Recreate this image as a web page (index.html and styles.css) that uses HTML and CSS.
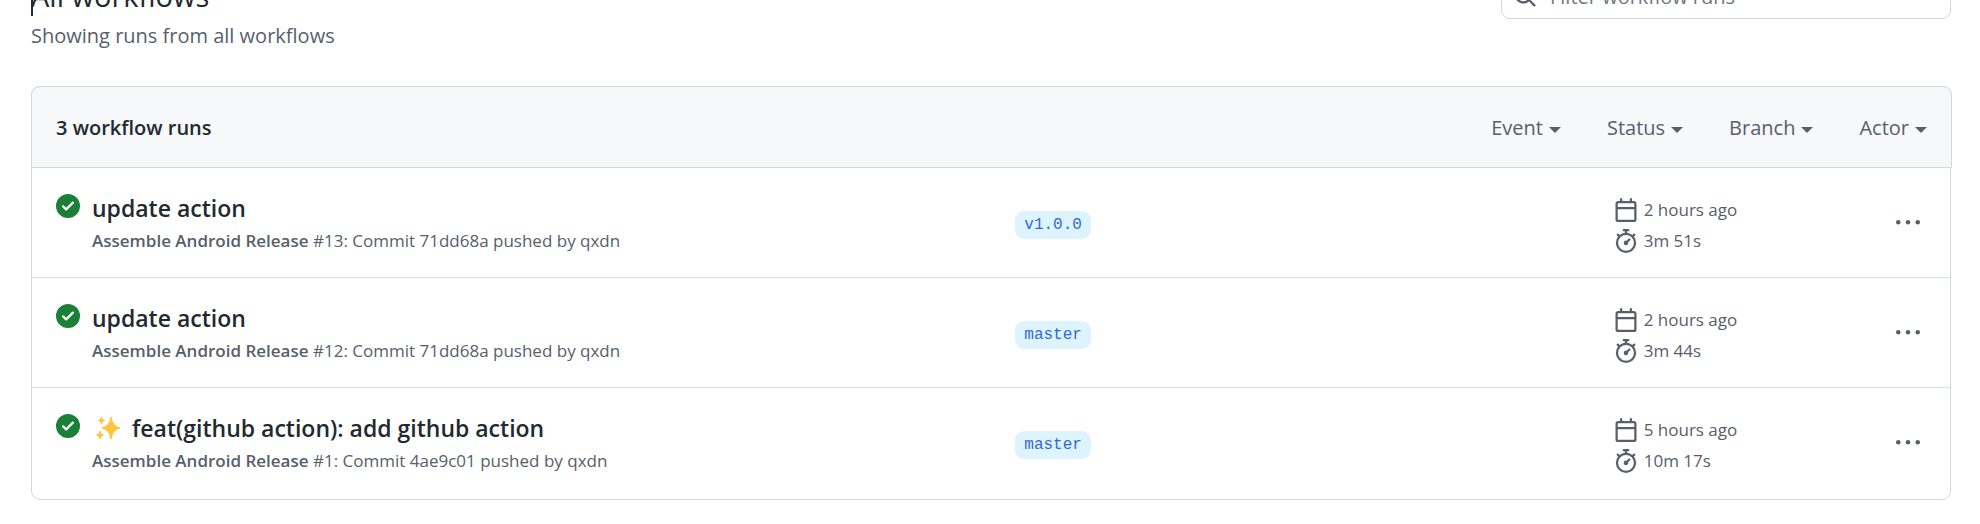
FILE: index.html
```html
<!DOCTYPE html>
<html lang="en">
<head>
<meta charset="utf-8">
<title>Workflow runs</title>
<link rel="stylesheet" href="styles.css">
</head>
<body>
<svg class="defs" aria-hidden="true">
  <symbol id="check" viewBox="0 0 16 16"><path fill-rule="evenodd" d="M8 16A8 8 0 108 0a8 8 0 000 16zm3.78-9.72a.75.75 0 00-1.06-1.06L6.75 9.19 5.28 7.72a.75.75 0 00-1.06 1.06l2 2a.75.75 0 001.06 0l4.5-4.5z"/></symbol>
  <symbol id="calendar" viewBox="0 0 16 16"><path fill-rule="evenodd" d="M4.75 0a.75.75 0 01.75.75V2h5V.75a.75.75 0 011.5 0V2h1.25c.966 0 1.75.784 1.75 1.75v10.5A1.75 1.75 0 0113.25 16H2.75A1.75 1.75 0 011 14.25V3.75C1 2.784 1.784 2 2.75 2H4V.75A.75.75 0 014.75 0zm0 3.5h8.5a.25.25 0 01.25.25V6h-11V3.75a.25.25 0 01.25-.25h2zm-2.25 4v6.75c0 .138.112.25.25.25h10.5a.25.25 0 00.25-.25V7.5h-11z"/></symbol>
  <symbol id="stopwatch" viewBox="0 0 16 16"><path fill-rule="evenodd" d="M5.75.75A.75.75 0 016.5 0h3a.75.75 0 010 1.5h-.75v1l-.001.041a6.718 6.718 0 013.464 1.435l.007-.006.75-.75a.75.75 0 111.06 1.06l-.75.75-.006.007a6.75 6.75 0 11-10.548 0L2.72 5.03l-.75-.75a.75.75 0 011.06-1.06l.75.75.007.006A6.718 6.718 0 017.25 2.541a.756.756 0 010-.041v-1H6.5a.75.75 0 01-.75-.75zM8 14.5A5.25 5.25 0 108 4a5.25 5.25 0 000 10.5zm.389-6.7l1.33-1.33a.75.75 0 111.061 1.06L9.45 8.861A1.502 1.502 0 018 10.75a1.5 1.5 0 11.389-2.95z"/></symbol>
  <symbol id="kebab" viewBox="0 0 16 16"><circle cx="1.5" cy="7.5" r="1.5"/><circle cx="8" cy="7.5" r="1.5"/><circle cx="14.5" cy="7.5" r="1.5"/></symbol>
  <symbol id="search" viewBox="0 0 16 16"><path fill-rule="evenodd" d="M11.5 7a4.499 4.499 0 11-8.998 0A4.499 4.499 0 0111.5 7zm-.82 4.74a6 6 0 111.06-1.06l3.04 3.04a.75.75 0 11-1.06 1.06l-3.04-3.04z"/></symbol>
  <symbol id="sparkles" viewBox="0 0 24 24"><path d="M15 1c1.500 6.500 3 9 9 11-6 2-7.500 4.500-9 11-1.500-6.500-3-9-9-11 6-2 7.500-4.500 9-11zM5.500 1c.5 2.200 1.100 2.900 3 3.500-1.900.6-2.500 1.300-3 3.500-.5-2.200-1.100-2.900-3-3.500 1.900-.6 2.500-1.300 3-3.500zM4 15c.6 2.400 1.200 3.300 3.500 4-2.300.7-2.900 1.600-3.500 4-.6-2.400-1.200-3.300-3.500-4 2.300-.7 2.900-1.600 3.500-4z" stroke="#fdc33b"/></symbol>
</svg>
<main class="page">
  <header class="intro">
    <div>
      <h1 class="heading">All workflows</h1>
      <p class="lead">Showing runs from all workflows</p>
    </div>
    <div class="search">
      <svg class="icon search-icon" aria-hidden="true"><use href="#search"/></svg>
      <input class="search-input" type="search" placeholder="Filter workflow runs" aria-label="Filter workflow runs">
    </div>
  </header>

  <section class="box">
    <div class="box-header">
      <h2 class="count">3 workflow runs</h2>
      <div class="filters">
        <button class="filter" type="button">Event</button>
        <button class="filter" type="button">Status</button>
        <button class="filter" type="button">Branch</button>
        <button class="filter" type="button">Actor</button>
      </div>
    </div>

    <article class="run">
      <div class="run-main">
        <svg class="icon success" role="img" aria-label="Success"><use href="#check"/></svg>
        <div>
          <h3 class="run-title"><a href="#run-13">update action</a></h3>
          <p class="run-info"><b>Assemble Android Release</b> #13: Commit <a href="#71dd68a">71dd68a</a> pushed by <a href="#qxdn">qxdn</a></p>
        </div>
      </div>
      <div><a class="branch" href="#v1.0.0">v1.0.0</a></div>
      <div class="run-side">
        <div class="times">
          <span class="time"><svg class="icon" aria-hidden="true"><use href="#calendar"/></svg>2 hours ago</span>
          <span class="time"><svg class="icon" aria-hidden="true"><use href="#stopwatch"/></svg>3m 51s</span>
        </div>
        <button class="more" type="button" aria-label="Show options"><svg class="icon" aria-hidden="true"><use href="#kebab"/></svg></button>
      </div>
    </article>

    <article class="run">
      <div class="run-main">
        <svg class="icon success" role="img" aria-label="Success"><use href="#check"/></svg>
        <div>
          <h3 class="run-title"><a href="#run-12">update action</a></h3>
          <p class="run-info"><b>Assemble Android Release</b> #12: Commit <a href="#71dd68a">71dd68a</a> pushed by <a href="#qxdn">qxdn</a></p>
        </div>
      </div>
      <div><a class="branch" href="#master">master</a></div>
      <div class="run-side">
        <div class="times">
          <span class="time"><svg class="icon" aria-hidden="true"><use href="#calendar"/></svg>2 hours ago</span>
          <span class="time"><svg class="icon" aria-hidden="true"><use href="#stopwatch"/></svg>3m 44s</span>
        </div>
        <button class="more" type="button" aria-label="Show options"><svg class="icon" aria-hidden="true"><use href="#kebab"/></svg></button>
      </div>
    </article>

    <article class="run">
      <div class="run-main">
        <svg class="icon success" role="img" aria-label="Success"><use href="#check"/></svg>
        <div>
          <h3 class="run-title"><svg class="icon sparkles" role="img" aria-label="Sparkles"><use href="#sparkles"/></svg><a href="#run-1">feat(github action): add github action</a></h3>
          <p class="run-info"><b>Assemble Android Release</b> #1: Commit <a href="#4ae9c01">4ae9c01</a> pushed by <a href="#qxdn">qxdn</a></p>
        </div>
      </div>
      <div><a class="branch" href="#master">master</a></div>
      <div class="run-side">
        <div class="times">
          <span class="time"><svg class="icon" aria-hidden="true"><use href="#calendar"/></svg>5 hours ago</span>
          <span class="time"><svg class="icon" aria-hidden="true"><use href="#stopwatch"/></svg>10m 17s</span>
        </div>
        <button class="more" type="button" aria-label="Show options"><svg class="icon" aria-hidden="true"><use href="#kebab"/></svg></button>
      </div>
    </article>
  </section>
</main>
</body>
</html>
```

FILE: styles.css
```css
* {
  box-sizing: border-box;
}

body {
  margin: 0;
  background: #fff;
  color: #24292f;
  font-family: "Open Sans", "Noto Sans", sans-serif;
  font-size: 20px;
  line-height: 30px;
}

h1, h2, h3, p {
  margin: 0;
}

a {
  color: inherit;
  text-decoration: none;
}

button {
  padding: 0;
  border: 0;
  background: none;
  color: #57606a;
  font: inherit;
  cursor: pointer;
}

.defs {
  position: absolute;
  width: 0;
  height: 0;
}

.icon {
  flex: none;
  width: 24px;
  height: 24px;
  fill: #57606a;
}

/* The page is scrolled a little way past its top. */
.page {
  margin-top: -29px;
  padding: 0 29px 24px 31px;
}

.intro {
  display: flex;
  justify-content: space-between;
  align-items: flex-start;
  gap: 24px;
  margin-bottom: 35px;
}

.heading {
  position: relative;
  font-size: 29px;
  font-weight: 400;
  line-height: 50px;
}

.heading::before {
  content: "";
  position: absolute;
  left: 0;
  top: 8px;
  width: 2px;
  height: 37px;
  background: #24292f;
}

.lead {
  color: #57606a;
}

.search {
  position: relative;
  width: 450px;
}

.search-icon {
  position: absolute;
  left: 12px;
  top: 13px;
}

.search-input {
  display: block;
  width: 100%;
  height: 48px;
  padding: 2px 16px 0 48px;
  border: 1px solid #d0d7de;
  border-radius: 9px;
  background: #fff;
  font: inherit;
}

.search-input::placeholder {
  color: #6e7781;
  opacity: 1;
}

.box {
  border: 1px solid #d0d7de;
  border-radius: 9px;
}

.box-header {
  display: flex;
  justify-content: space-between;
  align-items: center;
  margin: -1px -2px 0 -1px;
  padding: 26px 24px 24px;
  border: 1px solid #d0d7de;
  border-radius: 9px 9px 0 0;
  background: #f6f8fa;
}

.count {
  font-size: 20px;
  font-weight: 600;
}

.filters {
  display: flex;
  gap: 46px;
}

.filter {
  display: flex;
  align-items: center;
  gap: 6px;
}

.filter::after {
  content: "";
  margin-top: 4px;
  border: 6px solid transparent;
  border-top-color: currentColor;
  border-bottom: 0;
}

.run {
  display: grid;
  grid-template-columns: 51.3% 32% 1fr;
  align-items: center;
  padding: 22px 24px 21px;
}

.run + .run {
  border-top: 1px solid #d8dee4;
}

.run:last-child {
  padding-bottom: 23px;
}

.run-main {
  display: flex;
  gap: 12px;
}

.success {
  margin-top: 4px;
  fill: #1a7f37;
}

.run-title {
  display: flex;
  align-items: center;
  font-size: 23px;
  font-weight: 600;
  line-height: 36px;
}

.sparkles {
  margin: 0 12px 0 4px;
  fill: #fdc33b;
}

.run-info {
  color: #57606a;
  font-size: 17px;
}

.run-info b {
  font-weight: 600;
}

.branch {
  display: inline-block;
  padding: 0 9px;
  border-radius: 9px;
  background: #ddf4ff;
  color: #3368d6;
  font-family: "Liberation Mono", monospace;
  font-size: 16px;
  line-height: 28px;
}

.run-side {
  display: flex;
  justify-content: space-between;
  align-items: center;
}

.times {
  display: grid;
  gap: 1px;
  padding-top: 4px;
}

.time {
  display: flex;
  align-items: center;
  gap: 6px;
  color: #57606a;
  font-size: 17px;
}

.more {
  display: flex;
  padding: 6px;
}
```
